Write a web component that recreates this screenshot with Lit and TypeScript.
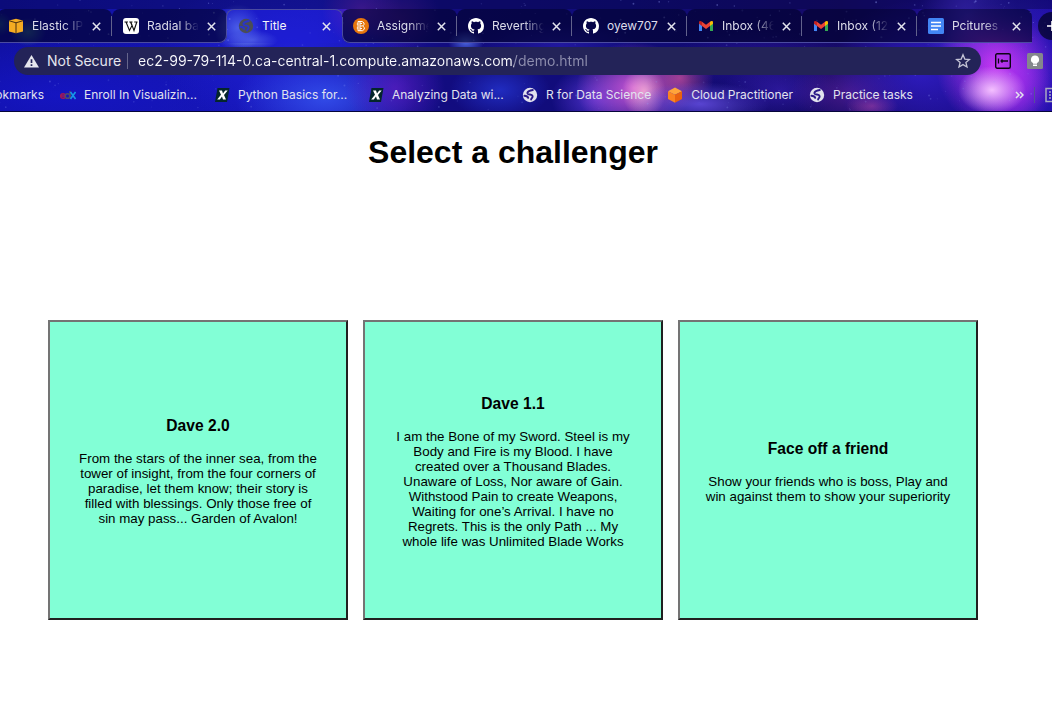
import { LitElement, html, svg, css, TemplateResult } from "lit";
import { customElement } from "lit/decorators.js";
import { classMap } from "lit/directives/class-map.js";

type IconName =
  | "box" | "wiki" | "globe" | "brain" | "github" | "gmail" | "doc"
  | "edx" | "xpro" | "cube";

interface Tab { title: string; icon: IconName; active?: boolean }
interface Bookmark { title: string; icon?: IconName; kind?: "cut" | "fixed" }
interface Challenger { name: string; text: string }

const TABS: Tab[] = [
  { title: "Elastic IP", icon: "box" },
  { title: "Radial ba", icon: "wiki" },
  { title: "Title", icon: "globe", active: true },
  { title: "Assignme", icon: "brain" },
  { title: "Reverting", icon: "github" },
  { title: "oyew707", icon: "github" },
  { title: "Inbox (46", icon: "gmail" },
  { title: "Inbox (12", icon: "gmail" },
  { title: "Pcitures ...", icon: "doc" },
];

const BOOKMARKS: Bookmark[] = [
  { title: "Bookmarks", kind: "cut" },
  { title: "Enroll In Visualizin...", icon: "edx", kind: "fixed" },
  { title: "Python Basics for...", icon: "xpro", kind: "fixed" },
  { title: "Analyzing Data wi...", icon: "xpro", kind: "fixed" },
  { title: "R for Data Science", icon: "globe" },
  { title: "Cloud Practitioner", icon: "cube" },
  { title: "Practice tasks", icon: "globe" },
];

const CHALLENGERS: Challenger[] = [
  {
    name: "Dave 2.0",
    text: "From the stars of the inner sea, from the tower of insight, from the four corners of paradise, let them know; their story is filled with blessings. Only those free of sin may pass... Garden of Avalon!",
  },
  {
    name: "Dave 1.1",
    text: "I am the Bone of my Sword. Steel is my Body and Fire is my Blood. I have created over a Thousand Blades. Unaware of Loss, Nor aware of Gain. Withstood Pain to create Weapons, Waiting for one’s Arrival. I have no Regrets. This is the only Path ... My whole life was Unlimited Blade Works",
  },
  {
    name: "Face off a friend",
    text: "Show your friends who is boss, Play and win against them to show your superiority",
  },
];

const GITHUB =
  "M8 0C3.58 0 0 3.58 0 8c0 3.54 2.29 6.53 5.47 7.59.4.07.55-.17.55-.38 0-.19-.01-.82-.01-1.49-2.01.37-2.53-.49-2.69-.94-.09-.23-.48-.94-.82-1.13-.28-.15-.68-.52-.01-.53.63-.01 1.08.58 1.23.82.72 1.21 1.87.87 2.33.66.07-.52.28-.87.51-1.07-1.78-.2-3.64-.89-3.64-3.95 0-.87.31-1.59.82-2.15-.08-.2-.36-1.02.08-2.12 0 0 .67-.21 2.2.82.64-.18 1.32-.27 2-.27s1.36.09 2 .27c1.53-1.04 2.2-.82 2.2-.82.44 1.1.16 1.92.08 2.12.51.56.82 1.27.82 2.15 0 3.07-1.87 3.75-3.65 3.95.29.25.54.73.54 1.48 0 1.07-.01 1.93-.01 2.2 0 .21.15.46.55.38A8.01 8.01 0 0 0 16 8c0-4.42-3.58-8-8-8z";

const ICONS: Record<IconName, TemplateResult> = {
  box: svg`<path d="M1 2.500 8 .8l7 1.700v11L8 15.300l-7-1.800z" fill="#f5ab22"/><path d="M1 2.700l7 2.100 7-2.100M8 4.800v10.500" fill="none" stroke="#4a2f10" stroke-width="1"/>`,
  wiki: svg`<rect width="16" height="16" rx="3" fill="#fff"/><path d="M1.500 4h3.500M6.300 4h3.200M11.200 4h3.300M3 4l3.500 8.500L9 7.500 7.500 4M7.800 4l3.200 8.500L13.800 4" fill="none" stroke="#111" stroke-width="1.100"/>`,
  globe: svg`<circle cx="8" cy="8" r="7.200" fill="currentColor"/><path d="M10.800 3C8.500 3.300 4.600 4.300 5.600 6.600 6.400 8.100 10 6.900 10.600 9c.5 1.900-1.500 2-1.500 3.600M2.400 8.800c1.600.1 3.200.4 3.800 2" fill="none" stroke="var(--globe-sea)" stroke-width="1.900" stroke-linecap="round"/>`,
  brain: svg`<circle cx="8" cy="8" r="8" fill="#e8760c"/><path d="M5 3.500h4.200l1.800 1.500v1.500L9.700 8l1.600 1.500v1.700L9.500 12.700H5zM7 3.500v9.200M5 6H3.800M5 10H3.800M7.200 8h2.400M7.200 5.500h1.800M7.200 10.500h1.800" fill="none" stroke="#fff" stroke-width="1"/>`,
  github: svg`<path d=${GITHUB} fill="#fff"/>`,
  gmail: svg`<path d="M1 4.500v8.500h3V7z" fill="#4285f4"/><path d="M15 4.500v8.500h-3V7z" fill="#34a853"/><path d="M4 7.900V3.700L8 6.700l4-3v4.200l-4 3z" fill="#ea4335"/><path d="M1 4.500C1 2.700 2.800 2.600 4 3.700v4.200L1 5.700z" fill="#c5221f"/><path d="M15 4.500c0-1.800-1.800-1.900-3-.8v4.200l3-2.200z" fill="#fbbc04"/>`,
  doc: svg`<rect width="16" height="16" rx="1.500" fill="#4285f4"/><path d="M3 4.500h10M3 8h10M3 11.500h7" stroke="#fff" stroke-width="1.700"/>`,
  edx: svg`<g fill="none" stroke-width="1.600"><circle cx="3" cy="9" r="2.300" stroke="#a01858"/><path d="M.8 9h4.400" stroke="#a01858"/><circle cx="7.500" cy="9" r="2.300" stroke="#4d4c70"/><path d="M10 4v7.500" stroke="#4d4c70"/><path d="M10.500 5l5 7M15.500 5l-5 7" stroke="#1598e6"/></g>`,
  xpro: svg`<path d="M3.500 1H15.500L13 15H1z" fill="#04262b"/><path d="M5 3.500h3l1 3 2.200-3h2.500L10 8l2 4.500H9L8 9.500l-2.200 3H3.200L7 7.800z" fill="#fff"/>`,
  cube: svg`<path d="M8 .5l7 3.700-7 3.600-7-3.600z" fill="#ffa53a"/><path d="M1 4.200l7 3.600v7.900l-7-3.600z" fill="#fb8420"/><path d="M15 4.200l-7 3.600v7.900l7-3.600z" fill="#e9620f"/>`,
};

const icon = (name: IconName) =>
  html`<svg class="icon" viewBox="0 0 16 16" aria-hidden="true">${ICONS[name]}</svg>`;

/** Soft clouds of the theme picture: centre, radii, colour, opacity. */
const CLOUDS: [number, number, number, number, string, number][] = [
  [60, 95, 240, 60, "#1616c8", 0.8],
  [290, 50, 130, 80, "#2020d8", 0.9],
  [325, 98, 90, 44, "#3450ec", 0.9],
  [238, 28, 24, 24, "#6f90f8", 0.8],
  [252, 40, 26, 10, "#7f9cf8", 0.6],
  [28, 32, 18, 14, "#3c8c90", 0.7],
  [0, 24, 12, 12, "#2a7c90", 0.6],
  [395, 88, 50, 44, "#5a1cc0", 0.75],
  [362, 10, 40, 36, "#7a2ac0", 0.7],
  [400, 18, 40, 36, "#6a2298", 0.5],
  [466, 42, 18, 12, "#5a7cf8", 0.8],
  [500, 90, 50, 30, "#2433d0", 0.8],
  [560, 45, 80, 22, "#2c20b8", 0.6],
  [597, 98, 46, 34, "#5f3ae0", 0.8],
  [634, 88, 58, 46, "#d058d8", 0.95],
  [644, 92, 22, 26, "#ffb8d8", 0.8],
  [680, 78, 34, 30, "#d0509c", 0.7],
  [700, 104, 70, 22, "#6a52e8", 0.8],
  [760, 60, 90, 30, "#3418b0", 0.5],
  [780, 90, 60, 26, "#3a20b8", 0.6],
  [850, 92, 60, 34, "#5a2098", 0.7],
  [872, 106, 26, 14, "#c04898", 0.6],
  [920, 70, 90, 70, "#3420d0", 0.8],
  [968, 15, 50, 60, "#5a3cf0", 0.8],
  [1020, 70, 70, 80, "#3c1cd0", 0.9],
  [996, 66, 60, 62, "#c838f4", 1],
  [1012, 88, 40, 44, "#b030f0", 0.7],
  [992, 90, 34, 24, "#f4c0ff", 1],
  [1010, 14, 50, 30, "#2a20b0", 0.6],
];

const STARS = (() => {
  let seed = 7;
  const next = () => (seed = (seed * 16807) % 2147483647) / 2147483647;
  return Array.from({ length: 380 }, () => ({
    x: next() * 1052,
    y: next() * 111,
    r: 0.4 + next() * 0.6,
    o: 0.12 + next() * 0.4,
  }));
})();

@customElement("space-theme")
export class SpaceTheme extends LitElement {
  static styles = css`
    :host { display: block; overflow: hidden; }
    svg { display: block; width: 100%; height: 100%; }
  `;

  render() {
    return html`<svg viewBox="0 0 1052 111" preserveAspectRatio="none" aria-hidden="true">
      <defs>
        <linearGradient id="sky">
          <stop offset="0" stop-color="#1010a0" />
          <stop offset="0.3" stop-color="#1818b8" />
          <stop offset="0.42" stop-color="#120c80" />
          <stop offset="0.6" stop-color="#100c78" />
          <stop offset="0.8" stop-color="#160a68" />
          <stop offset="1" stop-color="#1c0ca0" />
        </linearGradient>
        ${CLOUDS.map(
          ([, , , , color], i) => svg`<radialGradient id=${"c" + i}>
            <stop offset="0" stop-color=${color}/>
            <stop offset="0.4" stop-color=${color} stop-opacity="0.6"/>
            <stop offset="1" stop-color=${color} stop-opacity="0"/>
          </radialGradient>`
        )}
      </defs>
      <rect width="1052" height="111" fill="url(#sky)" />
      ${CLOUDS.map(
        ([x, y, rx, ry, , o], i) =>
          svg`<ellipse cx=${x} cy=${y} rx=${rx} ry=${ry} fill=${`url(#c${i})`} opacity=${o}/>`
      )}
      <rect width="1052" height="9" fill="#040440" opacity="0.4" />
      ${STARS.map(
        (s) => svg`<circle cx=${s.x} cy=${s.y} r=${s.r} fill="#9aa8ff" opacity=${s.o * (s.y > 43 ? 0.5 : 1)}/>`
      )}
    </svg>`;
  }
}

@customElement("browser-chrome")
export class BrowserChrome extends LitElement {
  static styles = css`
    :host {
      display: grid;
      grid-template: "all" auto / minmax(0, 1fr);
      overflow: hidden;
      border-bottom: 1px solid #06063a;
      font-family: Inter, "Liberation Sans", sans-serif;
      font-size: 12px;
      color: #dcdcea;
      --line: #4b4ba0;
    }
    space-theme { grid-area: all; height: 0; min-height: 100%; }
    .rows { grid-area: all; z-index: 1; min-width: 0; padding-top: 9px; }
    button, a { color: inherit; font: inherit; text-decoration: none; }
    button { border: 0; padding: 0; background: none; }
    .icon { display: block; flex: none; width: 16px; height: 16px; }

    .strip { display: flex; height: 34px; margin-left: -3px; }
    .tab {
      position: relative;
      box-sizing: border-box;
      display: flex;
      align-items: center;
      flex: 0 0 115px;
      min-width: 0;
      padding: 0 8px 0 11px;
      background: rgba(2, 2, 46, 0.66);
      border-radius: 8px 8px 0 0;
      --globe-sea: #2a35c8;
    }
    .tab::after {
      content: "";
      position: absolute;
      inset: 8px 0 0;
      border-bottom: 1px solid var(--line);
      pointer-events: none;
    }
    .tab.left { border-bottom-right-radius: 8px; }
    .tab.left::after { border-right: 1px solid var(--line); border-bottom-right-radius: 8px; }
    .tab.right { border-bottom-left-radius: 8px; }
    .tab.right::after { border-left: 1px solid var(--line); border-bottom-left-radius: 8px; }
    .tab.active { background: rgba(30, 30, 220, 0.3); color: #f4f4fa; }
    .tab.active .icon { color: #4a4d55; }
    .tab.active::after {
      inset: 0 -1px auto -1px;
      height: 8px;
      border: 1px solid var(--line);
      border-bottom: 0;
      border-radius: 8px 8px 0 0;
    }
    .tab.divided {
      background-image: linear-gradient(#62628c, #62628c);
      background-size: 1px 20px;
      background-position: right 7px;
      background-repeat: no-repeat;
    }
    .title { display: flex; align-items: center; flex: 1 1 0; gap: 8px; min-width: 0; height: 34px; }
    .label {
      flex: 1 1 0;
      min-width: 0;
      overflow: hidden;
      text-align: left;
      white-space: nowrap;
      line-height: 16px;
      -webkit-mask-image: linear-gradient(90deg, #000 60%, transparent);
      mask-image: linear-gradient(90deg, #000 60%, transparent);
    }
    .label.whole { -webkit-mask-image: none; mask-image: none; }
    .close { display: grid; flex: none; place-items: center; width: 16px; height: 16px; margin-left: 4px; }
    .close svg { width: 9px; height: 9px; }
    .new {
      display: flex;
      align-items: center;
      justify-content: center;
      flex: none;
      align-self: center;
      width: 28px;
      height: 28px;
      margin-left: 6px;
      border-radius: 14px;
      background: rgba(4, 4, 40, 0.75);
    }
    .new svg { width: 10px; height: 10px; }

    .toolbar { display: flex; align-items: center; gap: 14px; padding: 4px 9px 0 14px; }
    .omnibox {
      display: flex;
      align-items: center;
      flex: 1;
      min-width: 0;
      height: 28px;
      padding: 0 10px;
      border-radius: 14px;
      background: #232358;
      font-size: 14px;
      box-sizing: border-box;
    }
    .security { display: flex; align-items: center; gap: 8px; color: #e6e6ee; }
    .security span { padding-bottom: 2px; }
    .security svg { width: 15px; height: 16px; }
    .rule { width: 1px; height: 16px; background: #66668c; margin: 0 10px 0 6px; }
    .address {
      flex: 1;
      min-width: 0;
      height: 20px;
      padding: 0 0 2px;
      border: 0;
      outline: 0;
      font: inherit;
      background: linear-gradient(90deg, #fafafe 376px, #8e8eae 376px) text;
      -webkit-text-fill-color: transparent;
    }
    .extensions { display: flex; gap: 16px; }

    .bookmarks { display: flex; align-items: center; gap: 16px; height: 32px; padding-top: 4px; }
    .bookmark { display: flex; align-items: center; flex: none; gap: 8px; color: #e2e2ee; --globe-sea: #2a1a88; white-space: nowrap; }
    .bookmark span { padding-bottom: 2px; }
    .bookmark.cut { width: 44px; justify-content: flex-end; overflow: hidden; }
    .bookmark.fixed { width: 138px; }
    .spring { flex: 1; }
    .end { display: flex; align-items: center; gap: 10px; flex: none; width: 37px; overflow: hidden; }
    .more { display: grid; }
    .vrule { flex: none; width: 1px; height: 16px; background: #54509a; }
  `;

  private tab(tab: Tab, index: number) {
    const active = TABS.findIndex((t) => t.active);
    const classes = {
      tab: true,
      active: !!tab.active,
      left: index === active - 1,
      right: index === active + 1,
      divided: !tab.active && index !== active - 1 && index < TABS.length - 1,
    };
    const whole = tab.active || tab.title === "oyew707";
    return html`<div class=${classMap(classes)}>
      <button class="title" role="tab" aria-selected=${tab.active ? "true" : "false"}>
        ${icon(tab.icon)}<span class=${classMap({ label: true, whole })}>${tab.title}</span>
      </button>
      <button class="close" aria-label="Close tab">
        <svg viewBox="0 0 9 9"><path d="M.8.8l7.400 7.400M8.200.8L.8 8.200" stroke="#e4e4ee" stroke-width="1.500" /></svg>
      </button>
    </div>`;
  }

  render() {
    return html`
      <space-theme></space-theme>
      <div class="rows">
        <div class="strip" role="tablist">
          ${TABS.map((t, i) => this.tab(t, i))}
          <button class="new" aria-label="New tab">
            <svg viewBox="0 0 10 10"><path d="M0 5h10M5 0v10" stroke="#fff" stroke-width="1.600" /></svg>
          </button>
        </div>
        <div class="toolbar">
          <div class="omnibox">
            <button class="security">
              <svg viewBox="0 0 15 16" aria-hidden="true">
                <path d="M7.500 2L15 14.500H0z" fill="#e6e6ee" />
                <path d="M7.500 6.300v3.700M7.500 11.200v1.700" stroke="#232358" stroke-width="1.700" />
              </svg>
              <span>Not Secure</span>
            </button>
            <span class="rule"></span>
            <input class="address" aria-label="Address" spellcheck="false"
              .value=${"ec2-99-79-114-0.ca-central-1.compute.amazonaws.com/demo.html"} />
            <button aria-label="Bookmark this page">
              <svg class="icon" viewBox="0 0 16 16">
                <path d="M8 1.800l1.800 4.300 4.600.4-3.500 3 1.100 4.500L8 11.600 4 14l1.100-4.500-3.500-3 4.600-.4z" fill="none" stroke="#c4c4d6" stroke-width="1.300" />
              </svg>
            </button>
          </div>
          <div class="extensions">
            <button aria-label="Tab extension">
              <svg class="icon" viewBox="0 0 16 16">
                <rect x=".7" y=".7" width="14.600" height="14.600" rx="1.500" fill="none" stroke="#0c0414" stroke-width="1.400" />
                <path d="M3.500 5.500v5M5.500 8h7.500M7 6.300v3.400" stroke="#0c0414" stroke-width="1.300" fill="none" />
              </svg>
            </button>
            <button aria-label="Light bulb extension">
              <svg class="icon" viewBox="0 0 16 16">
                <rect width="16" height="16" rx="1.500" fill="#84878c" />
                <path d="M8 2.500a4 4 0 0 1 2 7.500v.8H6V10a4 4 0 0 1 2-7.500zM6 11.600h4v1.400H6z" fill="#fff" />
              </svg>
            </button>
          </div>
        </div>
        <nav class="bookmarks" aria-label="Bookmarks">
          ${BOOKMARKS.map(
            (b) => html`<a href="#" class=${classMap({ bookmark: true, cut: b.kind === "cut", fixed: b.kind === "fixed" })}
              >${b.icon ? icon(b.icon) : null}<span>${b.title}</span></a>`
          )}
          <span class="spring"></span>
          <div class="end">
            <button class="more" aria-label="More bookmarks">
              <svg width="9" height="8" viewBox="0 0 9 8"><path d="M1 1l3 3-3 3M5 1l3 3-3 3" fill="none" stroke="#e4e4ee" stroke-width="1.500" /></svg>
            </button>
            <span class="vrule"></span>
            <svg class="icon" viewBox="0 0 16 16" aria-hidden="true">
              <rect x="1" y="1.500" width="14" height="13" fill="none" stroke="#a8a8c0" stroke-width="1.500" />
              <path d="M4 5h2M4 8h2M4 11h2" stroke="#a8a8c0" stroke-width="1.500" />
            </svg>
          </div>
        </nav>
      </div>
    `;
  }
}

@customElement("app-root")
export class AppRoot extends LitElement {
  static styles = css`
    :host {
      display: block;
      min-height: 100vh;
      background: #fff;
      color: #000;
      font-family: "Liberation Sans", Arial, sans-serif;
    }
    main { padding-right: 26px; text-align: center; }
    h1 { margin: 0; padding: 22px 0 150px; font-size: 32px; line-height: 36px; }
    .cards { display: flex; flex-wrap: wrap; justify-content: center; gap: 15px; }
    .card {
      box-sizing: border-box;
      width: 300px;
      height: 300px;
      padding: 0 25px;
      border: 2px solid;
      border-color: #747474 #202020 #202020 #747474;
      background: #82ffd6;
      color: #000;
      font-family: inherit;
    }
    .card h3 { margin: 16px 0; line-height: 18px; }
    .card p { margin: 0 0 13px; line-height: 15px; }
  `;

  render() {
    return html`
      <browser-chrome></browser-chrome>
      <main>
        <h1>Select a challenger</h1>
        <div class="cards">
          ${CHALLENGERS.map(
            (c) => html`<button class="card"><h3>${c.name}</h3><p>${c.text}</p></button>`
          )}
        </div>
      </main>
    `;
  }
}
